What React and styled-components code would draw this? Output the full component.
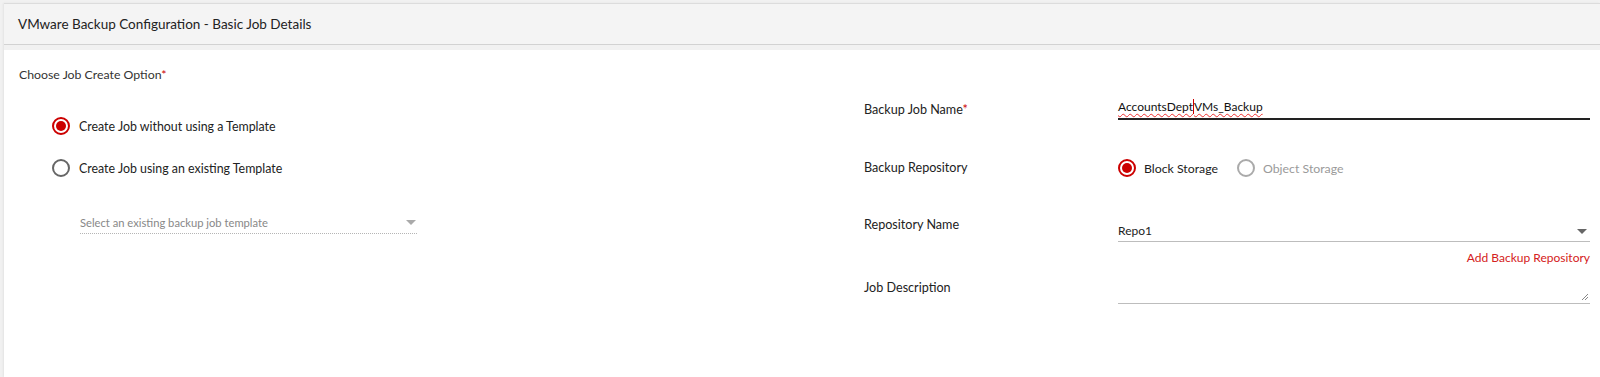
import React from "react";
import styled, { createGlobalStyle } from "styled-components";

const GlobalStyle = createGlobalStyle`
  html, body {
    margin: 0;
    padding: 0;
    background: #f1f1f1;
    font-family: Lato, "Open Sans", sans-serif;
  }
`;

const red = "#cc0000";

const Page = styled.div`
  width: 1600px;
  height: 377px;
  overflow: hidden;
  padding: 3px 0 0 4px;
  box-sizing: border-box;
`;

const Card = styled.div`
  height: 100%;
  display: flex;
  flex-direction: column;
  box-shadow: -1px 0 2px rgba(0, 0, 0, 0.06);
`;

const Header = styled.div`
  height: 40px;
  display: flex;
  align-items: center;
  padding-left: 14px;
  background: #f4f4f4;
  border-top: 1px solid #dcdcdc;
  border-bottom: 1px solid #d2d2d2;
  margin-bottom: 5px;
  font-size: 13.5px;
  color: #222;
`;

const Body = styled.div`
  flex: 1;
  background: #fff;
  display: flex;
`;

const LeftCol = styled.div`
  width: 860px;
  padding: 15px 0 0 15px;
  box-sizing: border-box;
`;

const Heading = styled.div`
  font-size: 12.3px;
  line-height: 20px;
  color: #333;
`;

const Required = styled.span`
  color: ${red};
`;

const RadioList = styled.div`
  padding: 31px 0 0 33px;
  display: flex;
  flex-direction: column;
  gap: 22px;
`;

const RadioItem = styled.label`
  display: flex;
  align-items: center;
  gap: ${(p) => p.$gap || 9}px;
  height: 20px;
  font-size: ${(p) => p.$size || 12.4}px;
  color: ${(p) => (p.$muted ? "#9a9a9a" : "#222")};
`;

const RadioCircle = styled.span`
  width: 18px;
  height: 18px;
  box-sizing: border-box;
  border-radius: 50%;
  border: 2px solid ${(p) => (p.$checked ? red : p.$muted ? "#aaa" : "#666")};
  display: flex;
  align-items: center;
  justify-content: center;
  flex-shrink: 0;

  &::after {
    content: "";
    width: 10px;
    height: 10px;
    border-radius: 50%;
    background: ${red};
    display: ${(p) => (p.$checked ? "block" : "none")};
  }
`;

const TemplateSelect = styled.div`
  margin: 34px 0 0 61px;
  width: 337px;
  height: 22px;
  display: flex;
  align-items: center;
  justify-content: space-between;
  font-size: 11.2px;
  color: #888;
  border-bottom: 1px dotted #b5b5b5;
  padding-right: 1px;
  box-sizing: border-box;
`;

const Caret = styled.span`
  width: 0;
  height: 0;
  border-left: 5px solid transparent;
  border-right: 5px solid transparent;
  border-top: 5px solid ${(p) => p.$color || "#aaa"};
`;

const RightCol = styled.div`
  flex: 1;
  padding: 47px 10px 0 0;
  display: flex;
  flex-direction: column;
`;

const FormRow = styled.div`
  display: grid;
  grid-template-columns: 254px 1fr;
  margin-bottom: ${(p) => p.$gap || 0}px;
`;

const Label = styled.div`
  font-size: 12.6px;
  line-height: 20px;
  color: #222;
  padding-top: ${(p) => p.$offset || 0}px;
`;

const TextInput = styled.div`
  height: 21px;
  line-height: 20px;
  font-size: 12px;
  color: #111;
  border-bottom: 2px solid #222;
`;

const Misspelled = styled.span`
  text-decoration: underline wavy #e33;
  text-decoration-thickness: 1px;
  text-underline-offset: 2px;
`;

const TextCaret = styled.span`
  display: inline-block;
  width: 1px;
  height: 15px;
  background: ${red};
  vertical-align: -3px;
`;

const RadioRow = styled.div`
  display: flex;
  gap: 19px;
  height: 20px;
  align-items: center;
`;

const SelectBox = styled.div`
  padding: 6px 3px 0 0;
  height: 20px;
  line-height: 20px;
  display: flex;
  align-items: center;
  justify-content: space-between;
  font-size: 12px;
  color: #222;
  border-bottom: 1px solid #bdbdbd;
`;

const AddLink = styled.div`
  text-align: right;
  margin-top: 8px;
  font-size: 12px;
  line-height: 16px;
  color: #d42020;
`;

const TextArea = styled.div`
  position: relative;
  height: 25px;
  border-bottom: 1px solid #bdbdbd;
`;

const ResizeGrip = styled.svg`
  position: absolute;
  right: 1px;
  bottom: 2px;
`;

export default function App() {
  return (
    <>
      <GlobalStyle />
      <Page>
        <Card>
          <Header>VMware Backup Configuration - Basic Job Details</Header>
          <Body>
            <LeftCol>
              <Heading>
                Choose Job Create Option<Required>*</Required>
              </Heading>
              <RadioList>
                <RadioItem>
                  <RadioCircle $checked />
                  Create Job without using a Template
                </RadioItem>
                <RadioItem>
                  <RadioCircle />
                  Create Job using an existing Template
                </RadioItem>
              </RadioList>
              <TemplateSelect>
                Select an existing backup job template
                <Caret />
              </TemplateSelect>
            </LeftCol>
            <RightCol>
              <FormRow $gap={38}>
                <Label $offset={3}>
                  Backup Job Name<Required>*</Required>
                </Label>
                <TextInput>
                  <Misspelled>AccountsDept</Misspelled>
                  <TextCaret />
                  <Misspelled>VMs_Backup</Misspelled>
                </TextInput>
              </FormRow>
              <FormRow $gap={37}>
                <Label>Backup Repository</Label>
                <RadioRow>
                  <RadioItem $gap={8} $size={12.3}>
                    <RadioCircle $checked />
                    Block Storage
                  </RadioItem>
                  <RadioItem $gap={8} $size={12.3} $muted>
                    <RadioCircle $muted />
                    Object Storage
                  </RadioItem>
                </RadioRow>
              </FormRow>
              <FormRow $gap={12}>
                <Label>Repository Name</Label>
                <div>
                  <SelectBox>
                    Repo1
                    <Caret $color="#666" />
                  </SelectBox>
                  <AddLink>Add Backup Repository</AddLink>
                </div>
              </FormRow>
              <FormRow>
                <Label>Job Description</Label>
                <TextArea>
                  <ResizeGrip width="8" height="8" viewBox="0 0 8 8">
                    <path d="M7 1L1 7M7 4L4 7" stroke="#888" strokeWidth="1" />
                  </ResizeGrip>
                </TextArea>
              </FormRow>
            </RightCol>
          </Body>
        </Card>
      </Page>
    </>
  );
}
